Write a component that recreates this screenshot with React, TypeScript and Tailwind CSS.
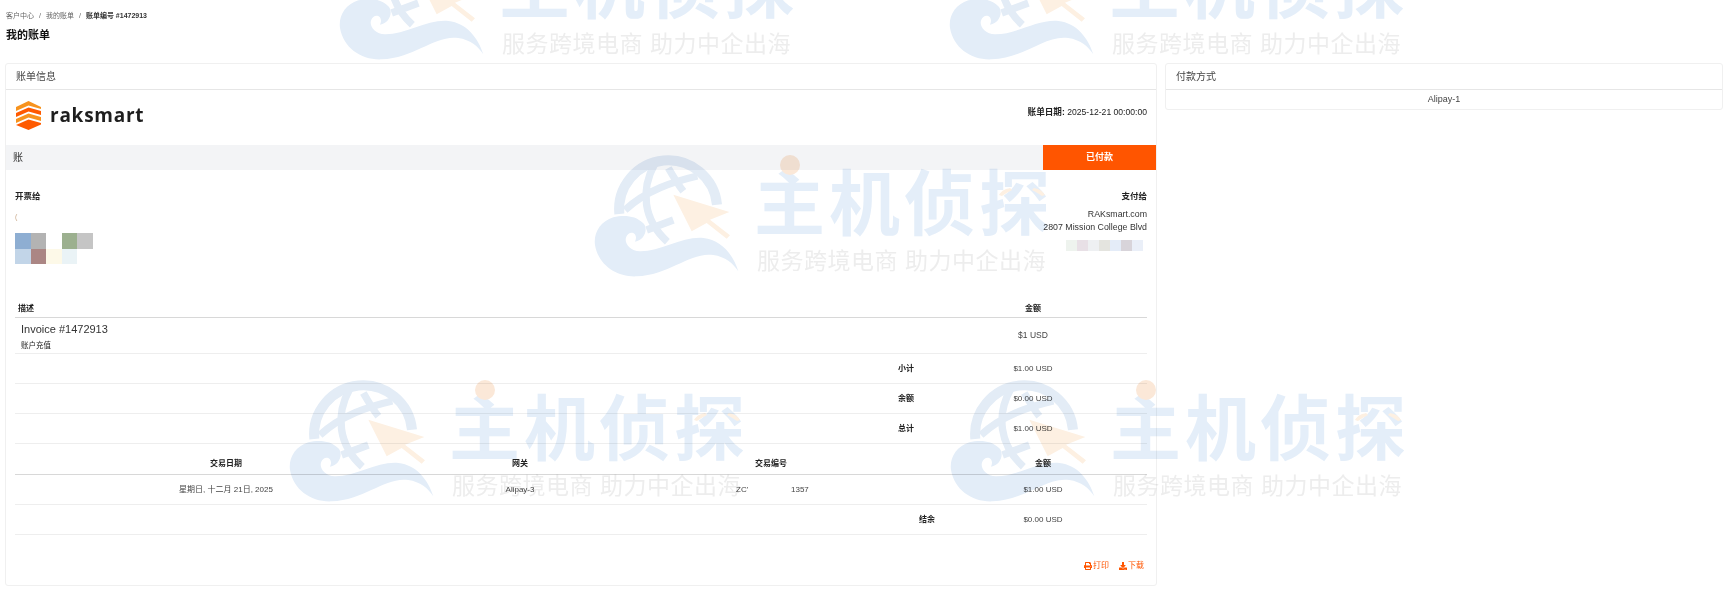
import { FaDownload, FaPrint } from "react-icons/fa";

const font = "font-['Liberation_Sans','Noto_Sans_CJK_SC',sans-serif]";

function Watermark({ className }: { className: string }) {
  return (
    <div
      className={`absolute flex w-[480px] h-[150px] pointer-events-none mix-blend-multiply ${className}`}
    >
      <svg viewBox="0 0 480 450" className="w-[160px] h-[150px] shrink-0">
        <path
          d="M118 222 A147 147 0 1 1 411 194"
          fill="none"
          stroke="#e3ecf6"
          strokeWidth="30"
        />
        <path
          d="M225 70 C180 150 190 240 262 305 M135 210 C200 150 280 125 352 108 M265 84 C280 110 295 135 310 154 M200 270 L280 240"
          fill="none"
          stroke="#e3ecf6"
          strokeWidth="22"
        />
        <path
          d="M280 164 L448 216 L390 239 L450 286 L440 296 L380 249 L335 274 Z"
          fill="#fdf0e2"
        />
        <path
          d="M475 394 C460 345 425 300 370 294 C310 288 240 335 180 334 C145 332 125 300 145 282 C158 272 175 285 165 305 C195 300 205 265 190 250 C165 225 130 225 100 232 C60 245 40 280 45 315 C55 375 110 412 170 409 C270 405 330 335 400 345 C435 350 460 370 475 394 Z"
          fill="#e3edf8"
        />
      </svg>
      <div className="relative ml-[17px] flex flex-col">
        <span className="absolute left-[23px] top-[15px] h-[20px] w-[20px] rounded-full bg-[#fbe8d8]" />
        <svg viewBox="0 0 50 10" className="absolute left-[240px] top-[47px] h-[10px] w-[50px]">
          <path d="M2 8 C5 3 9 2 13 1 L15 3 C11 5 8 7 5 9 Z M48 8 C45 3 41 2 37 1 L35 3 C39 5 42 7 45 9 Z" fill="#fdf0e2" />
        </svg>
        <div className="-ml-[3px] mt-[30px] h-[70px] w-[300px] whitespace-nowrap text-[71px] leading-[70px] font-bold tracking-[4px] text-[#e4eef9]">
          主机侦探
        </div>
        <div className="mt-[8px] whitespace-nowrap text-[23px] leading-[26px] tracking-[0.5px] text-[#ededed]">
          服务跨境电商 助力中企出海
        </div>
      </div>
    </div>
  );
}

function RaksmartLogo() {
  return (
    <div className="flex items-center">
      <svg viewBox="0 0 27 29" className="w-[27px] h-[29px]">
        <path d="M13.5 0 L26 6 V8 L13.5 4.5 L1 10 V6 Z" fill="#f7931e" />
        <path d="M1 12 L13.5 6.5 L26 10 V14 L13.5 10.5 L1 16 Z" fill="#ff5a00" />
        <path d="M1 18 L13.5 12.5 L26 16 V20 L13.5 16.5 L1 22 Z" fill="#f7931e" />
        <path d="M1 24 L13.5 18.5 L26 22 V23.5 L13.5 29 Z" fill="#ff5a00" />
      </svg>
      <span className="ml-[8px] text-[19px] leading-none font-bold tracking-[0.75px] text-[#1e1e1e] font-['Open_Sans',sans-serif]">
        raksmart
      </span>
    </div>
  );
}

function Cell({ color }: { color: string }) {
  return <div className={color} />;
}

function AmountRow({ label, value }: { label: string; value: string }) {
  return (
    <div className="grid grid-cols-[806px_170px_84px_72px] items-center h-[30px] border-b border-[#eeeeee] text-[8px]">
      <div />
      <div className="text-center font-bold text-[#222]">{label}</div>
      <div className="text-center text-[#444]">{value}</div>
      <div />
    </div>
  );
}

export default function App() {
  return (
    <div className={`relative h-[591px] w-[1728px] overflow-hidden bg-white text-[#222] ${font}`}>
      <div className="px-[6px] pt-[11px]">
        <div className="flex items-center h-[8px] text-[7px] leading-none text-[#666]">
          <span>客户中心</span>
          <span className="mx-[5px]">/</span>
          <span>我的账单</span>
          <span className="mx-[5px]">/</span>
          <span className="font-bold text-[#333]">账单编号 #1472913</span>
        </div>
        <div className="mt-[9px] text-[11px] leading-[14px] font-bold text-[#111]">我的账单</div>
      </div>

      <div className="mt-[21px] flex gap-[8px] pl-[5px]">
        {/* invoice card */}
        <div className="h-[523px] w-[1152px] rounded-[3px] border border-[#f0f0f0] bg-white">
          <div className="flex h-[26px] items-center border-b border-[#e6e6e6] px-[10px] text-[10px] text-[#444]">
            账单信息
          </div>
          <div className="flex h-[55px] items-start justify-between pl-[9px] pr-[9px] pt-[11px]">
            <RaksmartLogo />
            <div className="mt-[5px] text-[8.6px] leading-[12px]">
              <span className="font-bold">账单日期:</span> 2025-12-21 00:00:00
            </div>
          </div>
          <div className="flex h-[25px] items-center bg-[#f3f4f6]">
            <div className="flex-1 pl-[7px] text-[10px] text-[#333]">账</div>
            <div className="flex h-full w-[113px] items-center justify-center bg-[#ff5500] text-[9px] font-bold text-white">
              已付款
            </div>
          </div>

          <div className="flex h-[127px] justify-between px-[9px] pt-[21px]">
            <div>
              <div className="text-[8.5px] leading-[10px] font-bold">开票给</div>
              <div className="mt-[12px] text-[7px] leading-[8px] text-[#c9a98a]">(</div>
              <div className="mt-[12px] grid grid-cols-[16px_15px_16px_15px_16px] grid-rows-[16px_15px]">
                <Cell color="bg-[#8eaed2]" />
                <Cell color="bg-[#b3b3b3]" />
                <Cell color="bg-white" />
                <Cell color="bg-[#9cb08f]" />
                <Cell color="bg-[#c5c5c5]" />
                <Cell color="bg-[#c2d5e8]" />
                <Cell color="bg-[#ab8684]" />
                <Cell color="bg-[#fdf9e8]" />
                <Cell color="bg-[#eaf3f6]" />
                <Cell color="bg-white" />
              </div>
            </div>
            <div className="flex flex-col items-end">
              <div className="text-[8.5px] leading-[10px] font-bold">支付给</div>
              <div className="mt-[7px] text-[8.8px] leading-[13px] text-[#333]">RAKsmart.com</div>
              <div className="text-[8.8px] leading-[13px] text-[#333]">2807 Mission College Blvd</div>
              <div className="mt-[6px] mr-[4px] grid grid-cols-[repeat(7,11px)] h-[11px]">
                <Cell color="bg-[#eef3ee]" />
                <Cell color="bg-[#e8e0e6]" />
                <Cell color="bg-[#eef0f2]" />
                <Cell color="bg-[#e4e4df]" />
                <Cell color="bg-[#e4ecf8]" />
                <Cell color="bg-[#d8d4da]" />
                <Cell color="bg-[#eaeff8]" />
              </div>
            </div>
          </div>

          <div className="ml-[9px] w-[1132px]">
            <div className="grid grid-cols-[980px_76px_76px] h-[21px] items-center pt-[3px] border-b border-[#d8d8d8] text-[8px] font-bold">
              <div className="pl-[3px]">描述</div>
              <div className="text-center">金额</div>
              <div />
            </div>
            <div className="grid grid-cols-[980px_76px_76px] h-[36px] items-center border-b border-[#eeeeee]">
              <div className="pl-[6px]">
                <div className="text-[11px] leading-[14px] text-[#333]">Invoice #1472913</div>
                <div className="mt-[5px] text-[7.5px] leading-[9px]">账户充值</div>
              </div>
              <div className="text-center text-[8.5px] text-[#444]">$1 USD</div>
              <div />
            </div>
            <AmountRow label="小计" value="$1.00 USD" />
            <AmountRow label="余额" value="$0.00 USD" />
            <AmountRow label="总计" value="$1.00 USD" />

            <div className="grid grid-cols-[422px_166px_336px_208px] h-[31px] items-end pb-[4px] border-b border-[#d8d8d8] text-[8px] font-bold">
              <div className="text-center">交易日期</div>
              <div className="text-center">网关</div>
              <div className="text-center">交易编号</div>
              <div className="text-center">金额</div>
            </div>
            <div className="grid grid-cols-[422px_166px_336px_208px] h-[30px] items-center border-b border-[#eeeeee] text-[8px] text-[#444]">
              <div className="text-center">星期日, 十二月 21日, 2025</div>
              <div className="text-center">Alipay-3</div>
              <div className="flex pl-[133px]">
                <span className="w-[55px]">ZC'</span>
                <span>1357</span>
              </div>
              <div className="text-center">$1.00 USD</div>
            </div>
            <div className="grid grid-cols-[852px_120px_112px_48px] h-[30px] items-center border-b border-[#eeeeee] text-[8px]">
              <div />
              <div className="text-center font-bold text-[#222]">结余</div>
              <div className="text-center text-[#444]">$0.00 USD</div>
              <div />
            </div>
            <div className="flex justify-end gap-[10px] pt-[25px] pr-[3px] text-[8px] text-[#ff5500]">
              <span className="flex items-center gap-[1px]">
                <FaPrint className="h-[8px] w-[8px]" />
                打印
              </span>
              <span className="flex items-center gap-[1px]">
                <FaDownload className="h-[8px] w-[8px]" />
                下载
              </span>
            </div>
          </div>
        </div>

        {/* payment method card */}
        <div className="h-[47px] w-[558px] rounded-[3px] border border-[#f0f0f0] bg-white">
          <div className="flex h-[26px] items-center border-b border-[#e6e6e6] px-[10px] text-[10px] text-[#444]">
            付款方式
          </div>
          <div className="flex h-[19px] items-center justify-center text-[9px] text-[#444]">Alipay-1</div>
        </div>
      </div>

      <Watermark className="left-[325px] top-[-77px]" />
      <Watermark className="left-[935px] top-[-77px]" />
      <Watermark className="left-[580px] top-[140px]" />
      <Watermark className="left-[275px] top-[365px]" />
      <Watermark className="left-[936px] top-[365px]" />
    </div>
  );
}
